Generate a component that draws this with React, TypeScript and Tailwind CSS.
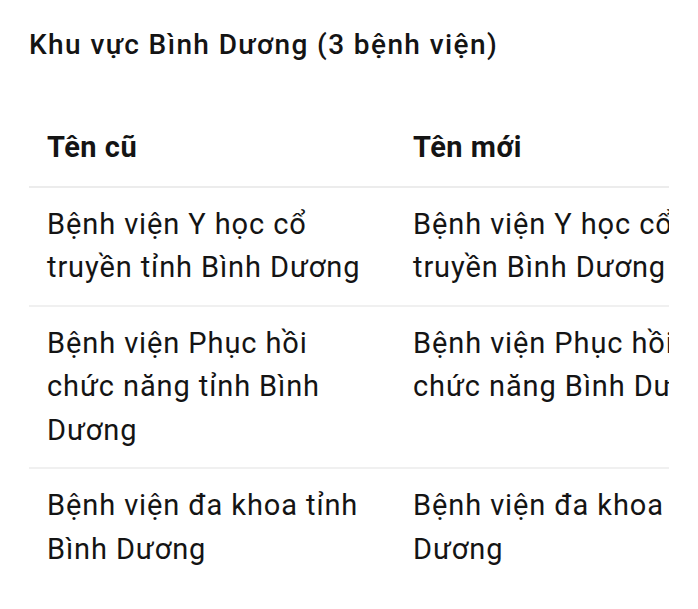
const rows = [
  {
    old: ['Bệnh viện Y học cổ', 'truyền tỉnh Bình Dương'],
    next: ['Bệnh viện Y học cổ', 'truyền Bình Dương'],
  },
  {
    old: ['Bệnh viện Phục hồi', 'chức năng tỉnh Bình', 'Dương'],
    next: ['Bệnh viện Phục hồi', 'chức năng Bình Dương'],
  },
  {
    old: ['Bệnh viện đa khoa tỉnh', 'Bình Dương'],
    next: ['Bệnh viện đa khoa Bình', 'Dương'],
  },
]

export default function App() {
  return (
    <div className="w-[698px] h-[609px] overflow-hidden bg-white font-['Roboto',sans-serif] text-[#141414]">
      <div className="pl-[29px] pt-[25px]">
        {/* Heading */}
        <h2 className="text-[28px] leading-[40px] font-medium tracking-[1.4px]">Khu vực Bình Dương (3 bệnh viện)</h2>

        {/* Table, scrolls sideways */}
        <div className="mt-[45px] w-[640px] overflow-hidden">
          <table className="w-[760px] table-fixed border-collapse text-left">
            <colgroup>
              <col className="w-[366px]" />
              <col />
            </colgroup>
            <thead>
              <tr className="border-b-2 border-[#ececec]">
                <th className="px-[18px] py-4 text-[29px] leading-[43.5px] font-bold tracking-[0.5px]">Tên cũ</th>
                <th className="px-[18px] py-4 text-[29px] leading-[43.5px] font-bold tracking-[0.5px]">Tên mới</th>
              </tr>
            </thead>
            <tbody>
              {rows.map((r, i) => (
                <tr key={i} className={i < rows.length - 1 ? 'border-b-2 border-[#f0f0f0]' : ''}>
                  <td className="px-[18px] py-[15px] align-top text-[29px] leading-[43.5px] tracking-[0.9px] whitespace-nowrap">
                    {r.old.map((l, j) => (
                      <div key={j}>{l}</div>
                    ))}
                  </td>
                  <td className="px-[18px] py-[15px] align-top text-[29px] leading-[43.5px] tracking-[0.9px] whitespace-nowrap">
                    {r.next.map((l, j) => (
                      <div key={j}>{l}</div>
                    ))}
                  </td>
                </tr>
              ))}
            </tbody>
          </table>
        </div>
      </div>
    </div>
  )
}
